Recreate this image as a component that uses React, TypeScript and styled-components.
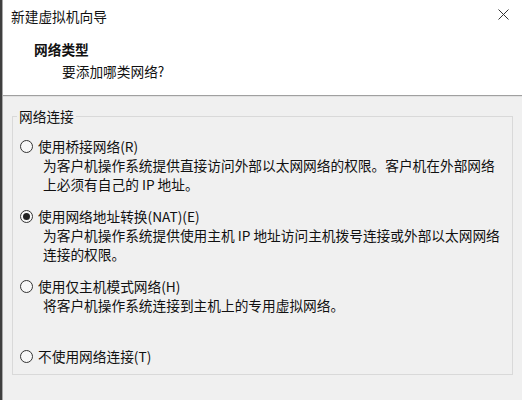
import React from "react";
import styled, { createGlobalStyle } from "styled-components";

const GlobalStyle = createGlobalStyle`
  html, body { margin: 0; padding: 0; }
  body {
    width: 522px;
    height: 400px;
    overflow: hidden;
    font-family: "Noto Sans CJK SC", "Noto Sans", "Liberation Sans", sans-serif;
    color: #111111;
  }
`;

const TEXT_SIZE = "13.7px";

const Page = styled.div`
  display: flex;
  width: 522px;
  height: 400px;
`;

const EdgeStrip = styled.div`
  width: 2px;
  flex-shrink: 0;
  background: #3f3f3f;
  border-right: 1px solid #a8a8a8;
`;

const Window = styled.div`
  flex: 1;
  min-width: 0;
  display: flex;
  flex-direction: column;
  background: #f0f0f0;
`;

const Header = styled.header`
  height: 96px;
  box-sizing: border-box;
  background: #ffffff;
  padding: 6px 12px 0 8px;
  border-bottom: 1px solid #a0a0a0;
  box-shadow: 0 1px 0 #e2e2e2;
`;

const TitleRow = styled.div`
  display: flex;
  justify-content: space-between;
  align-items: center;
  height: 20px;
`;

const Title = styled.span`
  font-size: ${TEXT_SIZE};
  line-height: 20px;
`;

const CloseButton = styled.button`
  display: flex;
  align-items: center;
  justify-content: center;
  width: 13px;
  height: 13px;
  padding: 0;
  border: none;
  background: transparent;
  margin-top: -3px;
`;

const Heading = styled.div`
  margin: 13px 0 0 23px;
  font-size: ${TEXT_SIZE};
  font-weight: 700;
  line-height: 20px;
`;

const Subtitle = styled.div`
  margin: 2px 0 0 51px;
  font-size: ${TEXT_SIZE};
  line-height: 20px;
`;

const Body = styled.div`
  flex: 1;
  padding: 10px 9px 0 9px;
`;

const Group = styled.fieldset`
  margin: 0;
  min-width: 0;
  padding: 10px 7px 8px 7px;
  border: 1px solid #d9d9d9;
  display: flex;
  flex-direction: column;
  gap: 12px;
`;

const Legend = styled.legend`
  font-size: ${TEXT_SIZE};
  line-height: 20px;
  padding: 0 2px;
  margin-left: -3px;
`;

const Option = styled.div`
  display: flex;
  flex-direction: column;
`;

const RadioRow = styled.label`
  display: flex;
  align-items: center;
  gap: 5px;
  height: 20px;
  font-size: ${TEXT_SIZE};
  line-height: 20px;
  white-space: nowrap;
`;

const RadioCircle = styled.span<{ $checked?: boolean }>`
  position: relative;
  width: 13px;
  height: 13px;
  box-sizing: border-box;
  border-radius: 50%;
  border: 1px solid #333333;
  background: #f7f7f7;
  flex-shrink: 0;
  &::after {
    content: "";
    display: ${(p) => (p.$checked ? "block" : "none")};
    position: absolute;
    left: 2px;
    top: 2px;
    width: 7px;
    height: 7px;
    border-radius: 50%;
    background: #222222;
  }
`;

const Description = styled.div<{ $minLines?: number }>`
  margin-left: 23px;
  font-size: ${TEXT_SIZE};
  line-height: 19px;
  white-space: nowrap;
  min-height: ${(p) => (p.$minLines ?? 0) * 19}px;
`;

type Opt = {
  label: string;
  lines: string[];
  checked?: boolean;
  minLines?: number;
};

const options: Opt[] = [
  {
    label: "使用桥接网络(R)",
    lines: [
      "为客户机操作系统提供直接访问外部以太网网络的权限。客户机在外部网络",
      "上必须有自己的 IP 地址。",
    ],
  },
  {
    label: "使用网络地址转换(NAT)(E)",
    lines: [
      "为客户机操作系统提供使用主机 IP 地址访问主机拨号连接或外部以太网网络",
      "连接的权限。",
    ],
    checked: true,
  },
  {
    label: "使用仅主机模式网络(H)",
    lines: ["将客户机操作系统连接到主机上的专用虚拟网络。"],
    minLines: 2,
  },
  { label: "不使用网络连接(T)", lines: [] },
];

export default function App() {
  return (
    <>
      <GlobalStyle />
      <Page>
        <EdgeStrip />
        <Window>
          <Header>
            <TitleRow>
              <Title>新建虚拟机向导</Title>
              <CloseButton aria-label="关闭">
                <svg width="11" height="11" viewBox="0 0 11 11">
                  <path d="M0.5 0.5 L10.5 10.5 M10.5 0.5 L0.5 10.5" stroke="#333" strokeWidth="1" fill="none" />
                </svg>
              </CloseButton>
            </TitleRow>
            <Heading>网络类型</Heading>
            <Subtitle>要添加哪类网络?</Subtitle>
          </Header>
          <Body>
            <Group>
              <Legend>网络连接</Legend>
              {options.map((o) => (
                <Option key={o.label}>
                  <RadioRow>
                    <RadioCircle $checked={o.checked} />
                    {o.label}
                  </RadioRow>
                  {(o.lines.length > 0 || o.minLines) && (
                    <Description $minLines={o.minLines}>
                      {o.lines.map((l) => (
                        <div key={l}>{l}</div>
                      ))}
                    </Description>
                  )}
                </Option>
              ))}
            </Group>
          </Body>
        </Window>
      </Page>
    </>
  );
}
